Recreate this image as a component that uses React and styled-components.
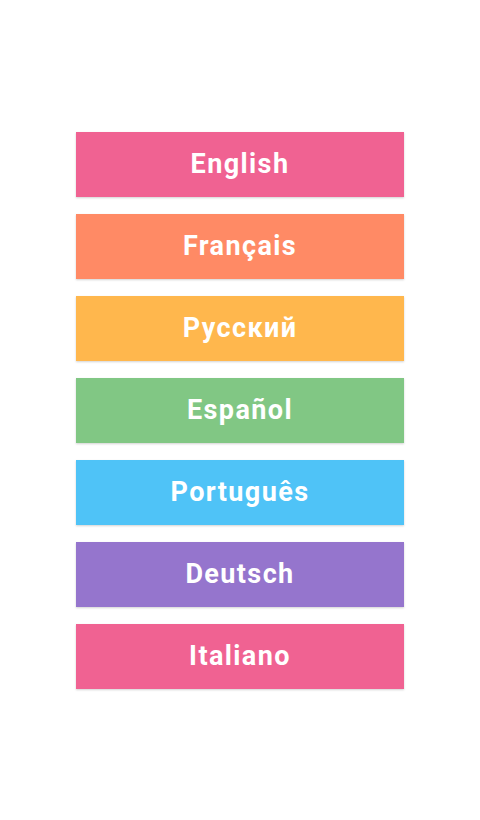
import React from "react";
import styled, { createGlobalStyle } from "styled-components";

const GlobalStyle = createGlobalStyle`
  html, body {
    margin: 0;
    padding: 0;
    background: #fff;
    font-family: Roboto, "Noto Sans", sans-serif;
  }
`;

const Page = styled.div`
  width: 100%;
  height: 820px;
  display: flex;
  align-items: center;
  justify-content: center;
`;

const List = styled.div`
  display: flex;
  flex-direction: column;
  gap: 17px;
  width: 328px;
`;

const LangButton = styled.button`
  height: 65px;
  border: none;
  margin: 0;
  padding: 0;
  background-color: ${(p) => p.color};
  color: #fff;
  font-family: Roboto, sans-serif;
  font-weight: bold;
  font-size: 27px;
  letter-spacing: 1.4px;
  box-shadow: 0 1px 2px rgba(0, 0, 0, 0.18);
  cursor: pointer;
`;

const languages = [
  { name: "English", color: "#F06292" },
  { name: "Français", color: "#FF8A65" },
  { name: "Русский", color: "#FFB74D" },
  { name: "Español", color: "#81C784" },
  { name: "Português", color: "#4FC3F7" },
  { name: "Deutsch", color: "#9575CD" },
  { name: "Italiano", color: "#F06292" },
];

export default function App() {
  return (
    <>
      <GlobalStyle />
      <Page>
        <List>
          {languages.map((l) => (
            <LangButton key={l.name} color={l.color}>
              {l.name}
            </LangButton>
          ))}
        </List>
      </Page>
    </>
  );
}
